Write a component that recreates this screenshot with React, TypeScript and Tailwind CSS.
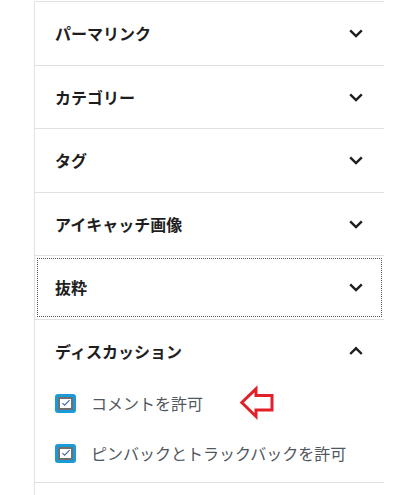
import type { ReactNode } from "react";

const jp = { fontFamily: '"Noto Sans CJK JP", "Noto Sans", sans-serif' };

function Chevron({ up }: { up?: boolean }) {
  return (
    <svg viewBox="0 0 16 16" width="16" height="16" className="shrink-0">
      <path
        d={up ? "M2.2 11L8 5.3L13.8 11" : "M2.2 5.3L8 11L13.8 5.3"}
        fill="none"
        stroke="#1e1e1e"
        strokeWidth="2.4"
      />
    </svg>
  );
}

function PanelTitle({ title, up, focused }: { title: string; up?: boolean; focused?: boolean }) {
  return (
    <div className="h-[62.5px] p-[2px]">
      <div
        className={`flex h-full items-center justify-between pl-[17px] pr-[17px] ${
          focused ? "border border-dotted border-[#555]" : "border border-transparent"
        }`}
      >
        <span className="text-[16px] font-bold text-[#1e1e1e] leading-none" style={jp}>
          {title}
        </span>
        <Chevron up={up} />
      </div>
    </div>
  );
}

function Panel({ children }: { children: ReactNode }) {
  return <div className="border-b border-[#e0e0e0]">{children}</div>;
}

function CheckBox() {
  return (
    <span className="flex h-[19px] w-[21px] shrink-0 rounded-[3px] bg-[#1a9ad6] p-[3px]">
      <span className="flex flex-1 items-center justify-center border-2 border-[#6f6f6f] bg-white">
        <svg viewBox="0 0 12 10" width="10" height="8">
          <path d="M1.5 5.2L4.3 7.8L10.5 1.5" fill="none" stroke="#3d68a8" strokeWidth="1.4" />
        </svg>
      </span>
    </span>
  );
}

function CheckRow({ label, children }: { label: string; children?: ReactNode }) {
  return (
    <div className="flex h-[26px] items-center">
      <CheckBox />
      <span className="ml-[15px] text-[16px] text-[#50575e]" style={jp}>
        {label}
      </span>
      {children}
    </div>
  );
}

function RedArrow() {
  return (
    <svg viewBox="0 0 36 36" width="36" height="36" className="ml-[36px] shrink-0">
      <path
        d="M2.8 17.5L17 3.8V10.5H33V25H17V31.5Z"
        fill="none"
        stroke="#e3202a"
        strokeWidth="3"
        strokeLinejoin="miter"
      />
    </svg>
  );
}

export default function App() {
  return (
    <div className="min-h-[495px] bg-white pt-px">
      <div className="ml-[34px] w-[350px] border-l-[1.5px] border-[#e2e2e4] min-h-[494px]">
        <div className="border-t-[1.5px] border-[#e2e2e4]" />
        <Panel>
          <PanelTitle title="パーマリンク" />
        </Panel>
        <Panel>
          <PanelTitle title="カテゴリー" />
        </Panel>
        <Panel>
          <PanelTitle title="タグ" />
        </Panel>
        <Panel>
          <PanelTitle title="アイキャッチ画像" />
        </Panel>
        <Panel>
          <PanelTitle title="抜粋" focused />
        </Panel>
        <Panel>
          <PanelTitle title="ディスカッション" up />
          <div className="flex flex-col gap-[24px] pl-[20px] pt-[8px] pb-[16px]">
            <CheckRow label="コメントを許可">
              <RedArrow />
            </CheckRow>
            <CheckRow label="ピンバックとトラックバックを許可" />
          </div>
        </Panel>
      </div>
    </div>
  );
}
